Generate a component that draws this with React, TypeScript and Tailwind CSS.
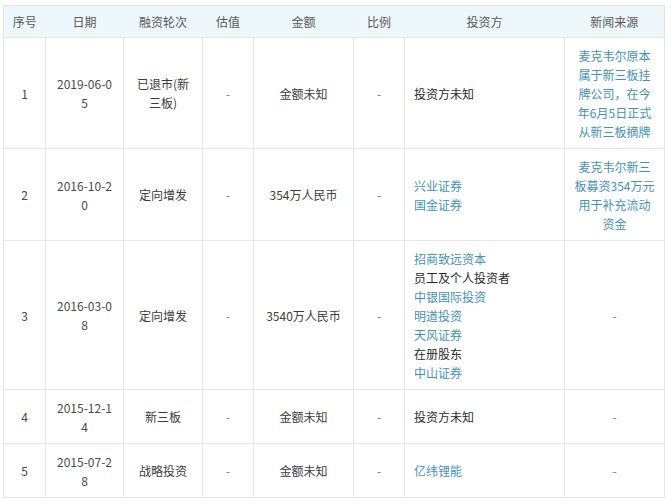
import React from "react";

type Line = { text: string; link?: boolean };

interface Round {
  no: string;
  date: string[];
  stage: string[];
  value: string;
  amount: string;
  ratio: string;
  investors: Line[];
  news: string[];
}

const rounds: Round[] = [
  {
    no: "1",
    date: ["2019-06-0", "5"],
    stage: ["已退市(新", "三板)"],
    value: "-",
    amount: "金额未知",
    ratio: "-",
    investors: [{ text: "投资方未知" }],
    news: ["麦克韦尔原本", "属于新三板挂", "牌公司，在今", "年6月5日正式", "从新三板摘牌"],
  },
  {
    no: "2",
    date: ["2016-10-2", "0"],
    stage: ["定向增发"],
    value: "-",
    amount: "354万人民币",
    ratio: "-",
    investors: [
      { text: "兴业证券", link: true },
      { text: "国金证券", link: true },
    ],
    news: ["麦克韦尔新三", "板募资354万元", "用于补充流动", "资金"],
  },
  {
    no: "3",
    date: ["2016-03-0", "8"],
    stage: ["定向增发"],
    value: "-",
    amount: "3540万人民币",
    ratio: "-",
    investors: [
      { text: "招商致远资本", link: true },
      { text: "员工及个人投资者" },
      { text: "中银国际投资", link: true },
      { text: "明道投资", link: true },
      { text: "天风证券", link: true },
      { text: "在册股东" },
      { text: "中山证券", link: true },
    ],
    news: [],
  },
  {
    no: "4",
    date: ["2015-12-1", "4"],
    stage: ["新三板"],
    value: "-",
    amount: "金额未知",
    ratio: "-",
    investors: [{ text: "投资方未知" }],
    news: [],
  },
  {
    no: "5",
    date: ["2015-07-2", "8"],
    stage: ["战略投资"],
    value: "-",
    amount: "金额未知",
    ratio: "-",
    investors: [{ text: "亿纬锂能", link: true }],
    news: [],
  },
];

const headers = ["序号", "日期", "融资轮次", "估值", "金额", "比例", "投资方", "新闻来源"];
const widths = ["w-[42px]", "w-[78px]", "w-[79px]", "w-[51px]", "w-[100px]", "w-[51px]", "w-[160px]", "w-[100px]"];

const Lines = ({ lines }: { lines: string[] }) => (
  <>
    {lines.map((l, i) => (
      <span key={i} className="block">
        {l}
      </span>
    ))}
  </>
);

export default function App() {
  return (
    <div
      className="min-h-[500px] bg-white pl-[3px] pt-[5px]"
      style={{ fontFamily: '"Noto Sans CJK SC", "Noto Sans", sans-serif' }}
    >
      <table className="w-[661px] table-fixed border-collapse border border-[#e3e3e3] text-[12px] leading-[19px] text-[#3c3c3c]">
        <colgroup>
          {widths.map((w, i) => (
            <col key={i} className={w} />
          ))}
        </colgroup>
        <thead>
          <tr className="h-8 bg-[#eef7fc]">
            {headers.map((h) => (
              <th key={h} className="border-b border-[#e6e6e6] text-center font-normal text-[#595959]">
                {h}
              </th>
            ))}
          </tr>
        </thead>
        <tbody>
          {rounds.map((r) => (
            <tr key={r.no} className="text-center">
              <td className="border border-[#e6e6e6] py-[7.5px] text-[#4a4a4a]">{r.no}</td>
              <td className="border border-[#e6e6e6] py-[7.5px] text-[#4a4a4a]">
                <Lines lines={r.date} />
              </td>
              <td className="border border-[#e6e6e6] py-[7.5px]">
                <Lines lines={r.stage} />
              </td>
              <td className="border border-[#e6e6e6] py-[7.5px] text-[#777]">{r.value}</td>
              <td className="border border-[#e6e6e6] py-[7.5px]">{r.amount}</td>
              <td className="border border-[#e6e6e6] py-[7.5px] text-[#777]">{r.ratio}</td>
              <td className="border border-[#e6e6e6] py-[7.5px] pl-[9px] text-left">
                {r.investors.map((inv, i) => (
                  <span key={i} className={inv.link ? "block text-[#4592b8]" : "block text-[#2a2a2a]"}>
                    {inv.text}
                  </span>
                ))}
              </td>
              <td className="border border-[#e6e6e6] py-[7.5px] text-[#4592b8]">
                {r.news.length ? <Lines lines={r.news} /> : <span className="text-[#777]">-</span>}
              </td>
            </tr>
          ))}
        </tbody>
      </table>
    </div>
  );
}
